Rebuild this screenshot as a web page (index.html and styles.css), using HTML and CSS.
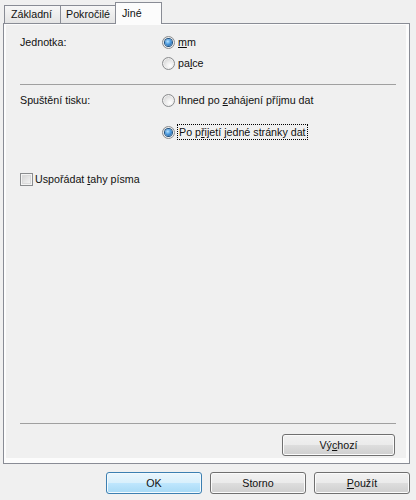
FILE: index.html
```html
<!DOCTYPE html>
<html lang="cs">
<head>
<meta charset="utf-8">
<title>Jiné</title>
<link rel="stylesheet" href="styles.css">
</head>
<body>
<div class="dialog">
  <div class="tabs">
    <div class="tab">Základní</div>
    <div class="tab">Pokročilé</div>
    <div class="tab active">Jiné</div>
  </div>
  <div class="panel">
    <div class="page">
      <div class="group">
        <div class="label">Jednotka:</div>
        <div class="options">
          <div class="opt"><span class="radio checked"><span class="dot"></span></span><span class="text"><u>m</u>m</span></div>
          <div class="opt"><span class="radio"></span><span class="text">pa<u>l</u>ce</span></div>
        </div>
      </div>
      <div class="sep"></div>
      <div class="group g2">
        <div class="label">Spuštění tisku:</div>
        <div class="options wide">
          <div class="opt"><span class="radio"></span><span class="text">Ihned po <u>z</u>ahájení příjmu dat</span></div>
          <div class="opt"><span class="radio checked"><span class="dot"></span></span><span class="text focus">Po p<u>ř</u>ijetí jedné stránky dat</span></div>
        </div>
      </div>
      <div class="check-row"><span class="checkbox"></span><span class="text">Uspořádat <u>t</u>ahy písma</span></div>
      <div class="spacer"></div>
      <div class="sep bottom"></div>
      <div class="page-actions"><div class="btn">Vý<u>c</u>hozí</div></div>
    </div>
  </div>
  <div class="actions">
    <div class="btn default">OK</div>
    <div class="btn">Storno</div>
    <div class="btn"><u>P</u>oužít</div>
  </div>
</div>
</body>
</html>
```
FILE: styles.css
```css
* { box-sizing: border-box; }
html, body {
  margin: 0;
  padding: 0;
  background: #f0f0f0;
}
body {
  font-family: "Liberation Sans", Arial, sans-serif;
  font-size: 10.7px;
  color: #111;
}
u { text-decoration: underline; text-underline-offset: 1px; }

.dialog {
  width: 416px;
  height: 500px;
  display: flex;
  flex-direction: column;
}

.tabs {
  height: 23px;
  display: flex;
  align-items: flex-end;
  padding-left: 4px;
}
.tab {
  height: 18px;
  line-height: 16px;
  padding: 0 0 0 6px;
  border: 1px solid #898c95;
  border-bottom: none;
  background: linear-gradient(#f7f7f7, #e4e4e4);
  margin-left: -1px;
  white-space: nowrap;
  overflow: hidden;
}
.tab:first-child { margin-left: 0; width: 57px; }
.tab:nth-child(2) { width: 56px; padding-left: 5px; }
.tab.active {
  height: 22px;
  width: 47px;
  margin-bottom: -1px;
  background: #fcfcfc;
  position: relative;
  z-index: 1;
  line-height: 20px;
  padding-left: 6px;
  margin-left: -1px;
}

.panel {
  margin-left: 3px;
  width: 407px;
  height: 441px;
  border: 1px solid #898c95;
  background: #fcfcfc;
  padding: 1px 3px 5px 2px;
  display: flex;
  flex-direction: column;
}
.page {
  flex: 1;
  background: #f0f0f0;
  padding: 9px 11px 2px 14px;
  display: flex;
  flex-direction: column;
}

.group {
  display: grid;
  grid-template-columns: 142px 1fr;
}
.label { line-height: 16px; height: 16px; }
.options {
  display: flex;
  flex-direction: column;
  gap: 5px;
}
.options.wide { gap: 16px; }
.g2 { margin-top: 7px; }

.opt {
  display: flex;
  align-items: center;
  height: 16px;
}
.text { line-height: 16px; white-space: nowrap; }
.opt .text { margin-left: 3px; }
.text.focus {
  line-height: 14px;
  border: 1px dotted #000;
  padding: 0 1px;
  margin-left: 2px;
}

.radio {
  width: 13px;
  height: 13px;
  border-radius: 50%;
  border: 1px solid #8a8c8e;
  background: radial-gradient(circle at 65% 70%, #ffffff 0%, #eeeeee 35%, #c8c8c8 100%);
  box-shadow: inset 0 0 0 1px #f0f0f0;
  display: flex;
  align-items: center;
  justify-content: center;
  flex: none;
}
.dot {
  width: 7px;
  height: 7px;
  border-radius: 50%;
  background: radial-gradient(circle at 40% 35%, #b9e4ff 0%, #4c9be0 45%, #17508a 100%);
  box-shadow: 0 0 0 1px #1d4f7e;
}

.sep {
  height: 1px;
  background: #a0a0a0;
  margin-top: 13px;
  margin-right: -1px;
}
.sep.bottom { margin-top: 0; margin-bottom: 10px; }

.check-row {
  margin-top: 31px;
  display: flex;
  align-items: center;
  height: 16px;
}
.checkbox {
  width: 13px;
  height: 13px;
  border: 1px solid #8a8c8e;
  background: linear-gradient(135deg, #d0d0d0, #fafafa);
  box-shadow: inset 0 0 0 1px #f4f4f4, inset 0 0 0 2px #dadada;
  flex: none;
}
.check-row .text { margin-left: 2px; }

.spacer { flex: 1; }

.page-actions {
  display: flex;
  justify-content: flex-end;
}
.page-actions .btn { width: 113px; }

.btn {
  height: 22px;
  line-height: 20px;
  text-align: center;
  border: 1px solid #707070;
  border-radius: 3px;
  background: linear-gradient(#f2f2f2 0%, #ebebeb 48%, #dddddd 52%, #cfcfcf 100%);
  box-shadow: inset 0 0 0 1px #fbfbfb;
}
.btn.default {
  border-color: #3c7fb1;
  background: linear-gradient(#eaf6fd 0%, #d9f0fc 48%, #bee6fd 52%, #a7d9f5 100%);
  box-shadow: inset 0 0 0 1px #f2fafe;
}

.actions {
  margin-top: 8px;
  display: flex;
  justify-content: flex-end;
  gap: 8px;
  padding-right: 6px;
}
.actions .btn { width: 96px; }
```
